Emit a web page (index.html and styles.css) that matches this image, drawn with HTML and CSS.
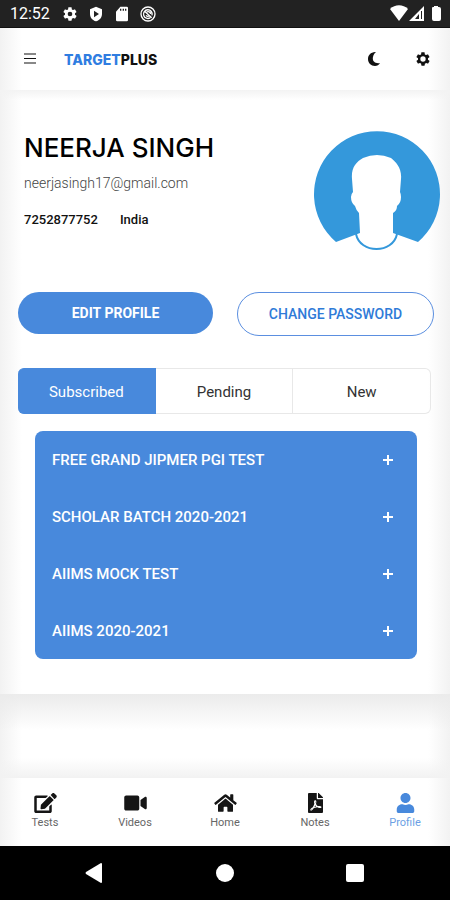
FILE: index.html
```html
<!DOCTYPE html>
<html lang="en">
<head>
<meta charset="utf-8">
<meta name="viewport" content="width=device-width, initial-scale=1">
<title>TargetPlus – Profile</title>
<link rel="stylesheet" href="styles.css">
</head>
<body>
<div class="status">
  <span class="time">12:52</span>
  <svg class="status-icon" viewBox="0 0 24 24"><path d="M19.4 13c.1-.3.1-.7.1-1s0-.7-.1-1l2.1-1.600c.2-.2.3-.4.1-.6l-2-3.500c-.1-.2-.4-.3-.6-.2l-2.500 1c-.5-.4-1.100-.7-1.700-1l-.4-2.600C14.500 2.200 14.200 2 14 2h-4c-.2 0-.5.2-.5.400L9.100 5.100c-.6.2-1.200.6-1.700 1l-2.500-1c-.2-.1-.5 0-.6.2l-2 3.500c-.1.2-.1.500.1.600L4.600 11c-.1.300-.1.700-.1 1s0 .7.1 1l-2.200 1.600c-.2.200-.2.400-.1.600l2 3.500c.1.200.4.300.6.200l2.500-1c.5.400 1.100.7 1.700 1l.4 2.600c0 .3.300.5.500.5h4c.2 0 .5-.2.500-.5l.4-2.600c.6-.2 1.200-.6 1.700-1l2.500 1c.2.100.5 0 .6-.2l2-3.500c.1-.2.100-.5-.1-.6zM12 15.500a3.500 3.500 0 1 1 0-7 3.500 3.500 0 0 1 0 7z" fill-rule="evenodd"/></svg>
  <svg class="status-icon" viewBox="0 0 24 24"><path fill-rule="evenodd" d="M12 1 3 5v7c0 5.500 3.800 9.700 9 11 5.200-1.300 9-5.500 9-11V5zM9 7l7.500 5L9 17z"/></svg>
  <svg class="status-icon" viewBox="0 0 24 24"><path fill-rule="evenodd" d="M19 1H9.500L3 8.500V21a2 2 0 0 0 2 2h14a2 2 0 0 0 2-2V3a2 2 0 0 0-2-2zM9 4h2v3H9zm4 0h2v3h-2zm3.500 0h2v3h-2z"/></svg>
  <svg class="status-icon outline" viewBox="0 0 24 24"><circle cx="12" cy="12" r="10.500"/><path d="M15.500 17.500A6.500 6.500 0 1 1 18 14M6.500 7.500l11 10M9 14a4 4 0 0 0 5 1M10 9a4 4 0 0 1 6 3"/></svg>
  <svg class="signal" viewBox="0 0 52 17"><path d="M0 4C5-1 13-1 18 4L9 16z"/><path fill-rule="evenodd" d="M34 1v15H19zM29 9l-4 5h4zM31 6v8h1V6z"/><path d="M42 3q0-1 1-1h1V1h4v1h1q2 0 2 2v10q0 2-2 2h-5q-2 0-2-2z"/></svg>
</div>

<div class="app">
  <header class="topbar">
    <button class="icon-button" aria-label="Menu"><svg width="12" height="12" viewBox="0 0 12 12"><path class="bar-soft" d="M0 0h12v2H0zM0 9h12v2H0z"/><path d="M0 5h12v1H0z"/></svg></button>
    <a class="brand" href="#"><span>TARGET</span>PLUS</a>
    <button class="icon-button" aria-label="Dark mode"><svg width="12" height="14" viewBox="0 0 12 14"><path d="M8 0C3-.200 0 3 0 7s3 7 7 7c2 0 4-1 5-3-5 1-8-2-7-6 .4-2 1.400-4 3-5z"/></svg></button>
    <button class="icon-button" aria-label="Settings"><svg width="16" height="16" viewBox="0 0 24 24"><path fill-rule="evenodd" d="M19.400 13c.1-.3.1-.7.1-1s0-.7-.1-1l2.100-1.600c.2-.2.3-.4.1-.6l-2-3.500c-.1-.2-.4-.3-.6-.2l-2.500 1c-.5-.4-1.100-.7-1.700-1l-.4-2.600C14.500 2.200 14.200 2 14 2h-4c-.2 0-.5.2-.5.400L9.100 5.100c-.6.2-1.200.6-1.700 1l-2.500-1c-.2-.1-.5 0-.6.2l-2 3.500c-.1.200-.1.500.1.600L4.600 11c-.1.300-.1.700-.1 1s0 .7.1 1l-2.200 1.600c-.2.200-.2.400-.1.600l2 3.500c.1.200.4.300.6.200l2.500-1c.5.400 1.100.7 1.700 1l.4 2.600c0 .3.300.5.500.5h4c.2 0 .5-.2.500-.5l.4-2.600c.6-.2 1.200-.6 1.700-1l2.500 1c.2.100.5 0 .6-.2l2-3.500c.1-.2.100-.5-.1-.6zM12 16a4 4 0 1 1 0-8 4 4 0 0 1 0 8z"/></svg></button>
  </header>

  <main class="content">
    <section class="profile">
      <div class="details">
        <h1>NEERJA SINGH</h1>
        <p class="email">neerjasingh17@gmail.com</p>
        <p class="facts"><span>7252877752</span><span>India</span></p>
      </div>
      <svg class="avatar" viewBox="0 0 128 120" role="img" aria-label="Profile photo">
        <path fill="#3498db" d="M23 111A63 63 0 1 1 105 111L80 102V82C83 80 84 78 84 75Q88 72 88 66Q88 63 87 61L88 48C89 37 83 31 78 27Q64 21 50 27C43 31 38 37 39 48L40 61Q38 63 38 66Q38 72 42 75Q43 79 46 82L47 102z"/>
        <path fill="none" stroke="#3498db" stroke-width="2" d="M43 103C47 123 80 123 84 103"/>
      </svg>
    </section>

    <div class="actions">
      <button class="pill filled">EDIT PROFILE</button>
      <button class="pill outlined">CHANGE PASSWORD</button>
    </div>

    <div class="tabs" role="tablist">
      <button role="tab" aria-selected="true">Subscribed</button>
      <button role="tab" aria-selected="false">Pending</button>
      <button role="tab" aria-selected="false">New</button>
    </div>

    <div class="courses">
      <button>FREE GRAND JIPMER PGI TEST<svg viewBox="0 0 10 10"><path d="M4 0h2v4h4v2H6v4H4V6H0V4h4z"/></svg></button>
      <button>SCHOLAR BATCH 2020-2021<svg viewBox="0 0 10 10"><path d="M4 0h2v4h4v2H6v4H4V6H0V4h4z"/></svg></button>
      <button>AIIMS MOCK TEST<svg viewBox="0 0 10 10"><path d="M4 0h2v4h4v2H6v4H4V6H0V4h4z"/></svg></button>
      <button>AIIMS 2020-2021<svg viewBox="0 0 10 10"><path d="M4 0h2v4h4v2H6v4H4V6H0V4h4z"/></svg></button>
    </div>
  </main>

  <div class="spacer"></div>

  <nav class="tabbar">
    <a href="#"><svg viewBox="0 0 576 512"><path d="M402.600 83.200l90.200 90.200c3.800 3.800 3.800 10 0 13.800L274.400 405.600l-92.800 10.300c-12.400 1.400-22.900-9.100-21.500-21.500l10.300-92.800L388.800 83.200c3.800-3.800 10-3.800 13.800 0zm162-22.900l-48.800-48.800c-15.200-15.200-39.900-15.200-55.200 0l-35.400 35.400c-3.800 3.800-3.800 10 0 13.800l90.200 90.200c3.800 3.800 10 3.800 13.800 0l35.400-35.400c15.200-15.300 15.200-40 0-55.200zM384 346.200V448H64V128h229.800c3.200 0 6.200-1.300 8.500-3.500l40-40c7.600-7.600 2.200-20.500-8.500-20.500H48C21.500 64 0 85.500 0 112v352c0 26.500 21.500 48 48 48h352c26.500 0 48-21.500 48-48V306.200c0-10.700-12.900-16-20.500-8.500l-40 40c-2.200 2.300-3.500 5.300-3.500 8.500z"/></svg>Tests</a>
    <a href="#"><svg viewBox="0 0 576 512"><path d="M336.200 64H47.800C21.400 64 0 85.400 0 111.800v288.400C0 426.600 21.400 448 47.800 448h288.400c26.400 0 47.800-21.400 47.800-47.800V111.800c0-26.400-21.400-47.800-47.800-47.800zm189.400 37.700L416 177.300v157.400l109.600 75.500c21.200 14.600 50.400-.3 50.400-25.800V127.500c0-25.400-29.100-40.400-50.400-25.800z"/></svg>Videos</a>
    <a href="#"><svg viewBox="0 0 576 512"><path d="M280.400 148.300L96 300.100V464a16 16 0 0 0 16 16l112.100-.3a16 16 0 0 0 15.900-16V368a16 16 0 0 1 16-16h64a16 16 0 0 1 16 16v95.600a16 16 0 0 0 16 16.100L464 480a16 16 0 0 0 16-16V300L295.700 148.300a12.200 12.200 0 0 0-15.300 0zM571.600 251.500L488 182.600V44.100a12 12 0 0 0-12-12h-56a12 12 0 0 0-12 12v72.600L318.500 43a48 48 0 0 0-61 0L4.300 251.500a12 12 0 0 0-1.600 16.900l25.500 31a12 12 0 0 0 16.900 1.600l235.200-193.700a12.200 12.200 0 0 1 15.300 0L530.900 301a12 12 0 0 0 16.900-1.600l25.500-31a12 12 0 0 0-1.700-16.900z"/></svg>Home</a>
    <a href="#"><svg viewBox="0 0 384 512"><path fill-rule="evenodd" d="M224 0H24C10 0 0 10 0 24v464c0 14 10 24 24 24h336c14 0 24-10 24-24V160H248c-14 0-24-10-24-24zm32 0v128h128v-6c0-7-3-13-7-17L279 7c-5-5-11-7-17-7zM165 190c20-14 48-6 48 30 0 25-4 40-8 62 12 26 26 39 42 50 30-3 92-5 98 24 5 32-43 42-105 6l-90 24c-29 48-57 75-82 62-28-17 4-61 56-85 17-30 29-56 39-86-10-30-13-70 2-87zm18 28c-6 14-3 32 2 46 5-17 7-39-2-46zm4 94c-8 20-15 34-23 48l46-14c-9-9-16-20-23-34zM111 397c-17 10-31 24-37 36 14-2 25-18 37-36z"/></svg>Notes</a>
    <a href="#" class="current" aria-current="page"><svg viewBox="0 0 448 512"><path d="M224 256c70.700 0 128-57.300 128-128S294.700 0 224 0 96 57.300 96 128s57.300 128 128 128zm89.600 32h-16.700c-22.200 10.200-46.900 16-72.900 16s-50.600-5.800-72.900-16h-16.700C60.200 288 0 348.200 0 422.400V464c0 26.500 21.500 48 48 48h352c26.500 0 48-21.500 48-48v-41.600c0-74.200-60.200-134.400-134.400-134.400z"/></svg>Profile</a>
  </nav>
</div>

<div class="system">
  <button aria-label="Back"><svg viewBox="0 0 20 20"><path d="M17 1v18q0 1-1 1L1 11q-1-1 0-2L16 0q1 0 1 1z"/></svg></button>
  <button aria-label="Home"><svg viewBox="0 0 20 20"><circle cx="10" cy="10" r="9"/></svg></button>
  <button aria-label="Recent apps"><svg viewBox="0 0 20 20"><rect x="1" y="1" width="18" height="18" rx="2"/></svg></button>
</div>
</body>
</html>
```
FILE: styles.css
```css
:root {
  --blue: #4889dc;
  --line: #e8e8e8;
}

* { box-sizing: border-box; }

body {
  margin: 0;
  min-height: 100vh;
  display: flex;
  flex-direction: column;
  font-family: Roboto, sans-serif;
  color: #111;
  background: #fff;
}

button {
  padding: 0;
  border: 0;
  background: none;
  color: inherit;
  font: inherit;
}

a { color: inherit; text-decoration: none; }
svg { display: block; fill: currentColor; }
h1, p { margin: 0; }

.status {
  display: flex;
  align-items: center;
  gap: 10px;
  height: 28px;
  padding: 0 8px 0 10px;
  border-bottom: 1px solid #111;
  background: #222;
  color: #fff;
}
.time { margin-right: 2px; font-size: 16px; line-height: 28px; }
.status-icon { width: 16px; height: 16px; }
.outline { fill: none; stroke: currentColor; stroke-width: 2; }
.signal { width: 52px; height: 17px; margin-left: auto; }

.app {
  flex: 1;
  display: flex;
  flex-direction: column;
  background: linear-gradient(to right, #f2f2f2, #fff 22px, #fff calc(100% - 22px), #f2f2f2);
}

.topbar {
  display: flex;
  align-items: center;
  height: 62px;
  padding: 0 19px 0 22px;
}
.icon-button { display: grid; place-items: center; width: 16px; height: 24px; }
.bar-soft { fill: #888; }
.brand { margin: 2px auto 0 26px; font: 800 14px/20px Inter, sans-serif; }
.brand span { color: #2f7de1; }
.brand + .icon-button { margin-right: 33px; }

.content {
  padding: 41px 16px 35px 18px;
  background: linear-gradient(#f3f3f3, rgba(255, 255, 255, 0) 10px);
}

.profile {
  display: flex;
  justify-content: space-between;
  padding-left: 6px;
  margin-right: -7px;
}
h1 { font: 500 26px/34px Inter, sans-serif; white-space: nowrap; color: #000; }
.email { margin-top: 8px; font-size: 14px; font-weight: 300; line-height: 20px; color: #444; }
.facts { display: flex; gap: 22px; margin-top: 18px; font: 500 13px/18px Roboto, sans-serif; }
.avatar { width: 128px; height: 120px; }

.actions { display: flex; align-items: flex-start; gap: 24px; margin-top: 41px; }
.pill {
  flex: 1;
  height: 42px;
  border-radius: 22px;
  font-size: 14px;
  font-weight: 700;
}
.filled { background: var(--blue); color: #fff; }
.outlined { height: 44px; border: 1px solid #5b8fe0; color: #2f7bd8; font-weight: 500; }

.tabs {
  display: flex;
  height: 46px;
  margin: 32px 3px 0 0;
  font-size: 15px;
  color: #333;
}
.tabs button {
  flex: 1;
  padding-top: 2px;
  border: 1px solid var(--line);
  border-left-width: 0;
}
.tabs button:first-child { border-radius: 6px 0 0 6px; }
.tabs button:last-child { border-radius: 0 6px 6px 0; }
.tabs [aria-selected="true"] { border-color: var(--blue); background: var(--blue); color: #fff; }

.courses {
  margin: 17px 17px 0;
  border-radius: 8px;
  background: var(--blue);
  color: #fff;
}
.courses button {
  display: flex;
  align-items: center;
  justify-content: space-between;
  width: 100%;
  height: 57px;
  padding: 0 24px 0 17px;
  font-size: 15px;
  font-weight: 500;
}
.courses svg { width: 10px; height: 10px; }

.spacer {
  flex: 1;
  min-height: 83px;
  background: linear-gradient(#ebebeb, rgba(255, 255, 255, 0) 36px, rgba(255, 255, 255, 0) calc(100% - 20px), #f2f2f2);
}

.tabbar { display: flex; height: 68px; padding-top: 15px; }
.tabbar a {
  flex: 1;
  display: flex;
  flex-direction: column;
  align-items: center;
  gap: 2px;
  font-size: 11px;
  line-height: 16px;
  color: #666;
}
.tabbar svg { height: 20px; width: 23px; fill: #151515; }
.tabbar .current { color: #6b9fe4; }
.tabbar .current svg { fill: var(--blue); }

.system {
  display: flex;
  align-items: center;
  justify-content: space-around;
  height: 54px;
  padding: 0 30px;
  background: #000;
  color: #fff;
}
.system svg { width: 20px; height: 20px; }
```
